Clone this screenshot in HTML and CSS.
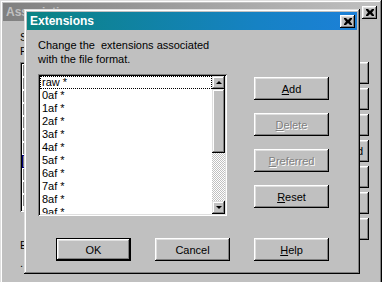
FILE: index.html
```html
<!DOCTYPE html>
<html lang="en">
<head>
    <meta charset="UTF-8">
    <title>Extensions</title>
    <link rel="stylesheet" href="styles.css">
</head>
<body>

    <!-- owner dialog, inactive -->
    <div class="win back">
        <div class="titlebar inactive">
            <span>Associations</span>
            <span class="close"><svg width="8" height="7" viewBox="0 0 8 7"><path d="M0 0h2l2 2 2-2h2v1L6 3.5 8 6v1H6L4 5 2 7H0V6l2-2.5L0 1z" fill="#000"/></svg></span>
        </div>
        <div class="back-body">
            <div class="back-main">
                <div class="line">S</div>
                <div class="line">F</div>
                <div class="back-list">
                    <div class="brow"><span class="box"></span></div>
                    <div class="brow"><span class="box"></span></div>
                    <div class="brow"><span class="box"></span></div>
                    <div class="brow"><span class="box"></span></div>
                    <div class="brow"><span class="box"></span></div>
                    <div class="brow"><span class="box"></span></div>
                    <div class="brow"><span class="box"></span></div>
                    <div class="brow sel"><span class="box"></span></div>
                    <div class="brow"><span class="box"></span></div>
                    <div class="brow"><span class="box"></span></div>
                    <div class="brow"><span class="box"></span></div>
                </div>
                <div class="line back-ext">E</div>
                <div class="line">.</div>
            </div>
            <div class="back-buttons">
                <button class="btn"></button>
                <button class="btn"></button>
                <button class="btn"></button>
                <button class="btn"><span class="peek">d</span></button>
                <button class="btn"></button>
                <button class="btn"></button>
                <button class="btn"></button>
            </div>
        </div>
    </div>

    <!-- Extensions dialog -->
    <div class="win front">
        <div class="titlebar active">
            <span>Extensions</span>
            <span class="close"><svg width="8" height="7" viewBox="0 0 8 7"><path d="M0 0h2l2 2 2-2h2v1L6 3.5 8 6v1H6L4 5 2 7H0V6l2-2.5L0 1z" fill="#000"/></svg></span>
        </div>
        <div class="front-body">
            <p class="intro">Change the &nbsp;extensions associated<br>with the file format.</p>
            <div class="main">
                <div class="listbox">
                    <div class="items">
                        <div class="item focus">raw *</div>
                        <div class="item">0af *</div>
                        <div class="item">1af *</div>
                        <div class="item">2af *</div>
                        <div class="item">3af *</div>
                        <div class="item">4af *</div>
                        <div class="item">5af *</div>
                        <div class="item">6af *</div>
                        <div class="item">7af *</div>
                        <div class="item">8af *</div>
                        <div class="item">9af *</div>
                    </div>
                    <div class="scrollbar">
                        <div class="sb-btn"><span class="arrow up"></span></div>
                        <div class="thumb"></div>
                        <div class="track"></div>
                        <div class="sb-btn"><span class="arrow down"></span></div>
                    </div>
                </div>
                <div class="side">
                    <button class="btn"><u>A</u>dd</button>
                    <button class="btn" disabled><u>D</u>elete</button>
                    <button class="btn" disabled><u>P</u>referred</button>
                    <button class="btn"><u>R</u>eset</button>
                </div>
            </div>
            <div class="footer">
                <button class="btn default">OK</button>
                <button class="btn">Cancel</button>
                <button class="btn"><u>H</u>elp</button>
            </div>
        </div>
    </div>

</body>
</html>
```

FILE: styles.css
```css
body {
    margin: 0;
    width: 382px;
    height: 282px;
    overflow: hidden;
    position: relative;
    background-color: #c0c0c0;
    font-family: "Liberation Sans", Arial, sans-serif;
    font-size: 11px;
    color: #000;
}


.win {
    position: absolute;
    box-sizing: border-box;
    padding: 3px;
    background-color: #c0c0c0;
    box-shadow: inset -1px -1px #000, inset 1px 1px #dfdfdf,
                inset -2px -2px #808080, inset 2px 2px #fff;
}

/* runs off the bottom of the shot, so no bottom edge */
.back {
    left: 0;
    top: 0;
    width: 382px;
    height: 282px;
    box-shadow: inset -1px 0 #000, inset 1px 1px #dfdfdf,
                inset -2px 0 #808080, inset 2px 2px #fff;
}

.front {
    left: 24px;
    top: 9px;
    width: 336px;
    height: 265px;
}


.titlebar {
    height: 18px;
    display: flex;
    justify-content: space-between;
    align-items: center;
    padding: 0 2px 0 3px;
    font-size: 12px;
    font-weight: bold;
    color: #fff;
}

.titlebar.active {
    background: linear-gradient(90deg, #0b8383, #1682c4 70%, #1c80d8);
}

.titlebar.inactive {
    background: linear-gradient(90deg, #808080, #c0c0c0);
    color: #c0c0c0;
}

.close {
    width: 15px;
    height: 13px;
    display: flex;
    justify-content: center;
    align-items: center;
    background-color: #c0c0c0;
    box-shadow: inset -1px -1px #000, inset 1px 1px #fff,
                inset -2px -2px #808080, inset 2px 2px #dfdfdf;
}


.btn {
    width: 75px;
    height: 23px;
    box-sizing: border-box;
    padding: 0;
    border: none;
    background-color: #c0c0c0;
    font-family: inherit;
    font-size: 11px;
    color: #000;
    box-shadow: inset -1px -1px #000, inset 1px 1px #fff,
                inset -2px -2px #808080, inset 2px 2px #dfdfdf;
}

.btn:disabled {
    color: #808080;
    text-shadow: 1px 1px #fff;
}

.btn.default {
    border: 1px solid #000;
}


/* owner dialog */
.back-body {
    display: grid;
    grid-template-columns: 1fr 75px;
    column-gap: 12px;
    padding: 9px 10px 0 17px;
}

.line {
    line-height: 14px;
    white-space: nowrap;
}

.back-list {
    margin-top: 4px;
    height: 150px;
    box-sizing: border-box;
    padding: 2px;
    background-color: #fff;
    box-shadow: inset 1px 1px #808080, inset -1px -1px #fff,
                inset 2px 2px #000, inset -2px -2px #dfdfdf;
    overflow: hidden;
}

.brow {
    display: flex;
    align-items: center;
    height: 13px;
}

.brow .box {
    width: 9px;
    height: 9px;
    margin-left: 1px;
    border: 1px solid #808080;
    background-color: #fff;
}

.brow.sel {
    background-color: #000080;
}

.back-ext {
    margin-top: 26px;
    margin-bottom: 4px;
}

.back-buttons {
    display: flex;
    flex-direction: column;
    gap: 4px;
    padding-top: 32px;
}

.back-buttons .btn {
    height: 22px;
    text-align: right;
    padding-right: 6px;
}


/* Extensions dialog */
.front-body {
    padding: 8px 0 0 11px;
}

.intro {
    margin: 0;
    line-height: 14px;
}

.main {
    display: grid;
    grid-template-columns: 189px 75px;
    column-gap: 27px;
    margin-top: 8px;
}

.listbox {
    height: 142px;
    box-sizing: border-box;
    padding: 2px;
    display: flex;
    background-color: #fff;
    box-shadow: inset 1px 1px #808080, inset -1px -1px #fff,
                inset 2px 2px #000, inset -2px -2px #dfdfdf;
}

.items {
    flex: 1;
    overflow: hidden;
}

.item {
    height: 13px;
    line-height: 13px;
    padding-left: 2px;
    box-sizing: border-box;
}

.item.focus {
    outline: 1px dotted #000;
    outline-offset: -1px;
}

.scrollbar {
    width: 13px;
    display: flex;
    flex-direction: column;
}

.sb-btn {
    height: 13px;
    display: flex;
    justify-content: center;
    align-items: center;
    background-color: #c0c0c0;
    box-shadow: inset -1px -1px #000, inset 1px 1px #dfdfdf,
                inset -2px -2px #808080, inset 2px 2px #fff;
}

.arrow {
    width: 0;
    height: 0;
    border-left: 3px solid transparent;
    border-right: 3px solid transparent;
}

.arrow.up {
    border-bottom: 3px solid #000;
}

.arrow.down {
    border-top: 3px solid #000;
}

.thumb {
    height: 64px;
    background-color: #c0c0c0;
    box-shadow: inset -1px -1px #000, inset 1px 1px #dfdfdf,
                inset -2px -2px #808080, inset 2px 2px #fff;
}

.track {
    flex: 1;
    background: repeating-conic-gradient(#c0c0c0 0 25%, #fff 0 50%) 0 0 / 2px 2px;
}

.side {
    display: flex;
    flex-direction: column;
    gap: 13px;
    padding-top: 3px;
}

.footer {
    display: flex;
    gap: 24px;
    margin-top: 22px;
    padding-left: 18px;
}
```
